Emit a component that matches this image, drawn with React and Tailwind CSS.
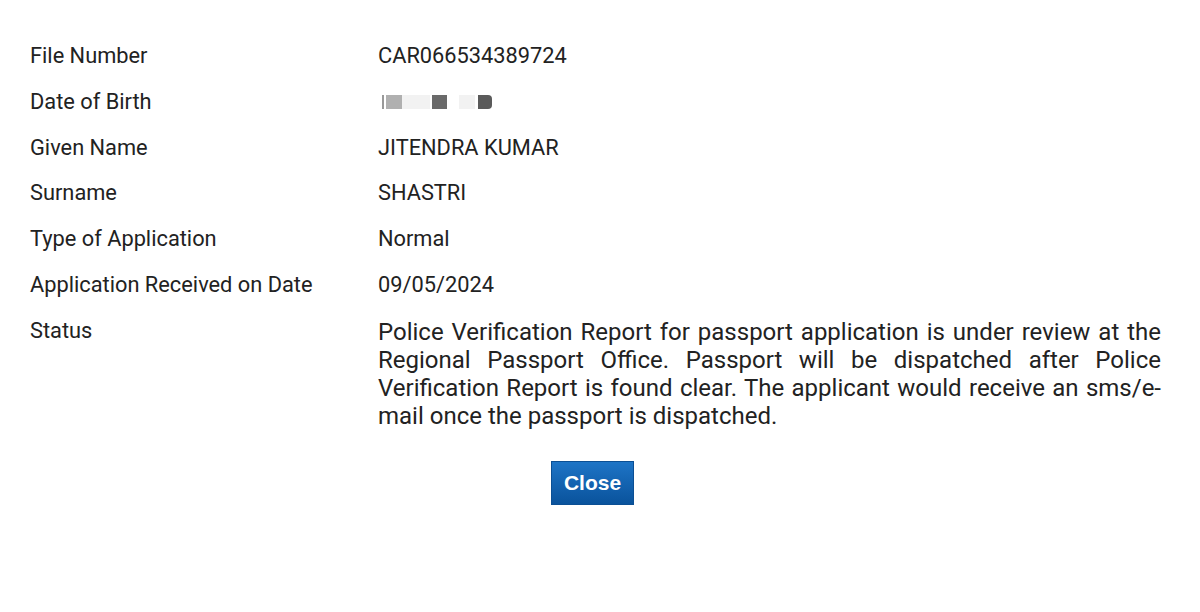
export default function App() {
  const rows = [
    ['File Number', 'CAR066534389724'],
    ['Date of Birth', null],
    ['Given Name', 'JITENDRA KUMAR'],
    ['Surname', 'SHASTRI'],
    ['Type of Application', 'Normal'],
    ['Application Received on Date', '09/05/2024'],
  ];

  return (
    <div className="w-[1200px] h-[612px] bg-white text-[#222] font-['Roboto',sans-serif]">
      <div className="pl-[30px] pt-[41px] w-[1161px]">
        {rows.map(([label, value]) => (
          <div key={label} className="flex h-[45.8px] text-[21.8px] leading-[30px]">
            <div className="w-[348px] shrink-0">{label}</div>
            <div className="flex-1">
              {value ?? (
                <div className="flex items-center h-[30px] pl-[4px]">
                  <div className="w-[2px] h-[14px] bg-[#999]" />
                  <div className="w-[16px] h-[14px] bg-[#b0b0b0] ml-[2px]" />
                  <div className="w-[28px] h-[14px] bg-[#f2f2f2]" />
                  <div className="w-[15px] h-[14px] bg-[#6a6a6a] ml-[2px]" />
                  <div className="w-[12px] h-[14px]" />
                  <div className="w-[16px] h-[14px] bg-[#f2f2f2]" />
                  <div className="w-[14px] h-[14px] bg-[#5a5a5a] ml-[3px] rounded-r-[4px]" />
                </div>
              )}
            </div>
          </div>
        ))}
        <div className="flex text-[21.8px] leading-[30px]">
          <div className="w-[348px] shrink-0">Status</div>
          <div className="flex-1 text-[24px] leading-[28px] text-justify pt-[2px]">
            Police Verification Report for passport application is under review at the Regional Passport Office. Passport will be dispatched after Police Verification Report is found clear. The applicant would receive an sms/e-mail once the passport is dispatched.
          </div>
        </div>
        <div className="pl-[521px] pt-[31px]">
          <button className="w-[83px] h-[44px] bg-gradient-to-b from-[#1d74c6] to-[#0a539c] text-white font-bold text-[21px] font-['Liberation_Sans',Arial,sans-serif] border border-[#0b4f94]">
            Close
          </button>
        </div>
      </div>
    </div>
  );
}
